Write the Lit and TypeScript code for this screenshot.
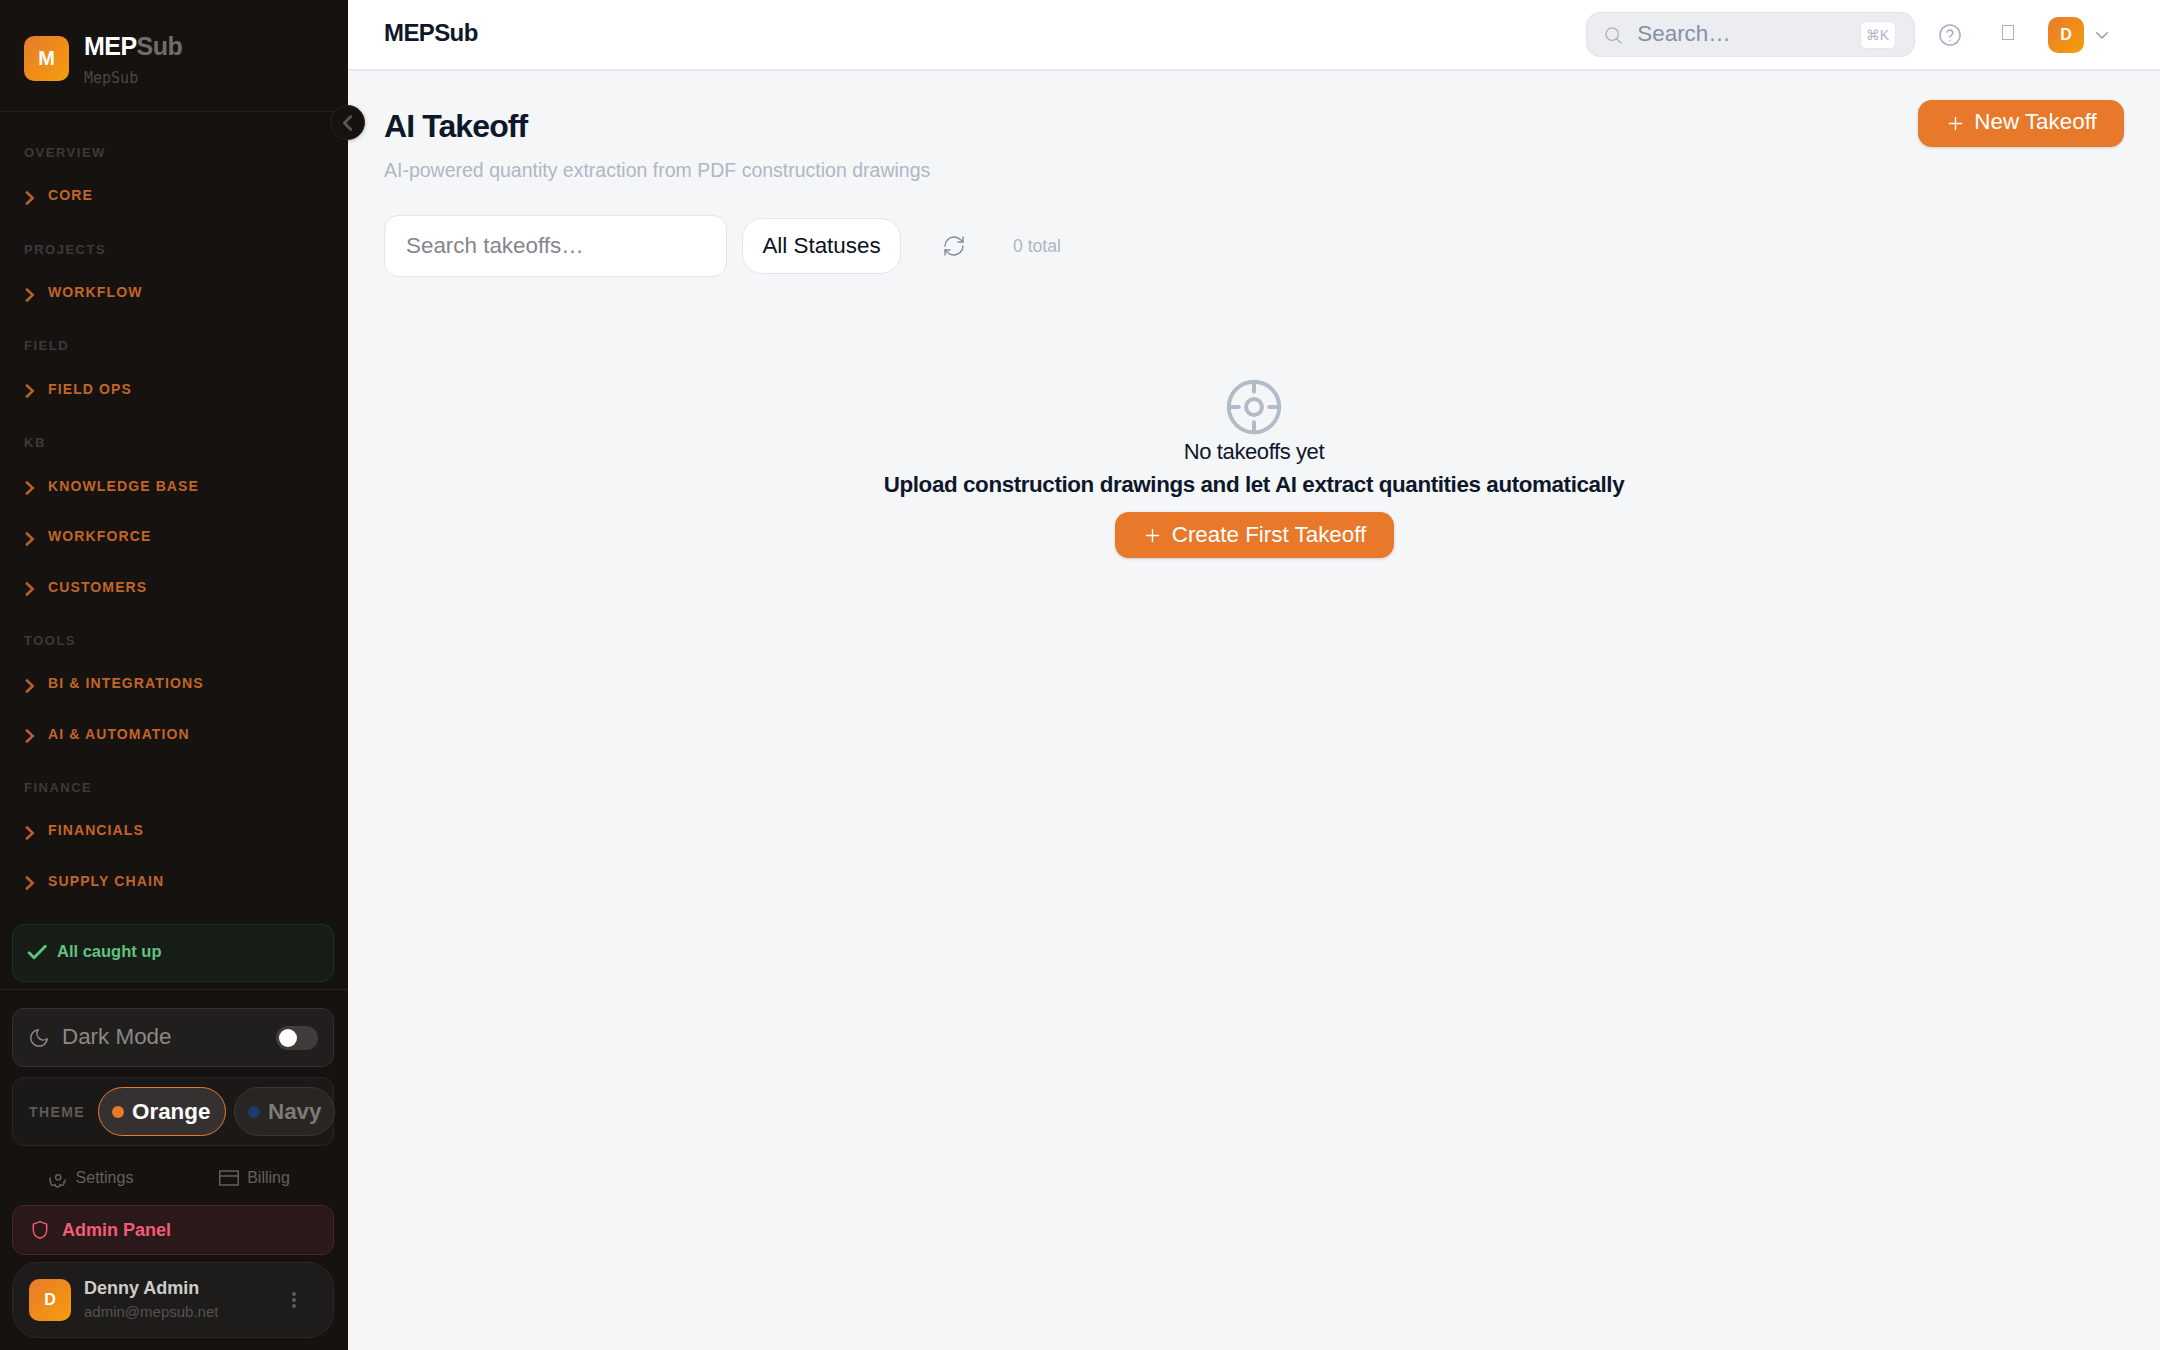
import { LitElement, html, css, svg } from 'lit';
import { customElement } from 'lit/decorators.js';

const chevron = html`<svg class="chev" viewBox="0 0 24 24"><path d="M2.500 4.500l8 7.500-8 7.500" /></svg>`;

const navGroups: { label: string; items: string[] }[] = [
  { label: 'OVERVIEW', items: ['CORE'] },
  { label: 'PROJECTS', items: ['WORKFLOW'] },
  { label: 'FIELD', items: ['FIELD OPS'] },
  { label: 'KB', items: ['KNOWLEDGE BASE', 'WORKFORCE', 'CUSTOMERS'] },
  { label: 'TOOLS', items: ['BI & INTEGRATIONS', 'AI & AUTOMATION'] },
  { label: 'FINANCE', items: ['FINANCIALS', 'SUPPLY CHAIN'] },
];

const plus = svg`<path d="M12 5v14M5 12h14" />`;

@customElement('app-root')
export class AppRoot extends LitElement {
  static styles = css`
    :host {
      display: flex;
      width: 2160px;
      height: 1350px;
      overflow: hidden;
      background: #f5f6f8;
      font-family: 'Liberation Sans', Arial, sans-serif;
      color: #0f172a;
    }
    svg {
      fill: none;
      stroke: currentColor;
      stroke-linecap: round;
      stroke-linejoin: round;
      flex: none;
    }

    /* sidebar */
    .sidebar {
      position: relative;
      width: 348px;
      flex: none;
      height: 1350px;
      box-sizing: border-box;
      background: #151210;
      display: flex;
      flex-direction: column;
    }
    .brand {
      height: 112px;
      flex: none;
      box-sizing: border-box;
      border-bottom: 1px solid #262321;
      display: flex;
      align-items: flex-start;
      gap: 15px;
      padding: 36px 24px 0;
    }
    .logo {
      width: 45px;
      height: 45px;
      border-radius: 10px;
      background: linear-gradient(135deg, #e87a2c, #f59e0b);
      color: #fff;
      font-weight: 700;
      font-size: 20px;
      display: flex;
      align-items: center;
      justify-content: center;
      flex: none;
    }
    .brand-name {
      font-size: 25px;
      font-weight: 700;
      letter-spacing: -0.55px;
      line-height: 30px;
      color: #fff;
      margin-top: -5px;
    }
    .brand-name span {
      color: #6f6d6b;
    }
    .brand-sub {
      font-family: 'DejaVu Sans Mono', monospace;
      font-size: 15px;
      line-height: 16px;
      color: #4a4846;
      margin-top: 9px;
    }
    .collapse {
      position: absolute;
      top: 105px;
      right: -17px;
      width: 35px;
      height: 35px;
      border-radius: 50%;
      background: #151210;
      border: 1px solid #262321;
      box-sizing: border-box;
      box-shadow: 0 1px 4px rgba(0, 0, 0, 0.25);
      color: #5a5755;
      display: flex;
      align-items: center;
      justify-content: center;
    }
    .collapse svg {
      width: 22px;
      height: 22px;
      stroke-width: 3;
    }
    .nav {
      padding: 32px 24px 0;
      height: 812px;
      flex: none;
      box-sizing: border-box;
    }
    .group-label {
      font-size: 13px;
      font-weight: 700;
      letter-spacing: 1.5px;
      line-height: 18px;
      color: #3c3a38;
    }
    .group {
      margin-bottom: 20px;
    }
    .nav-item {
      height: 50.5px;
      display: flex;
      align-items: center;
      gap: 4px;
      font-size: 14px;
      font-weight: 700;
      letter-spacing: 1.12px;
      color: #c2652a;
    }
    .group-label + .nav-item {
      margin-top: 8.2px;
    }
    .chev {
      width: 20px;
      height: 20px;
      stroke-width: 3;
      margin-top: 5px;
      stroke-linecap: butt;
      stroke-linejoin: miter;
      color: #b9602a;
    }
    .status {
      margin: 0 14px 0 12px;
      height: 58px;
      flex: none;
      box-sizing: border-box;
      border: 1px solid #18351f;
      border-radius: 12px;
      background: #161d17;
      color: #62c27f;
      display: flex;
      align-items: flex-start;
      gap: 10px;
      padding: 17px 14px 0;
      font-size: 16.5px;
      font-weight: 700;
    }
    .status svg {
      width: 20px;
      height: 20px;
      stroke-width: 3.4;
    }
    .foot {
      margin-top: 7px;
      border-top: 1px solid #262321;
      padding: 18px 14px 0 12px;
      display: flex;
      flex-direction: column;
    }
    .dark {
      height: 59px;
      box-sizing: border-box;
      border: 1px solid #33302e;
      border-radius: 12px;
      background: #211f1d;
      color: #8b8886;
      display: flex;
      align-items: center;
      padding: 0 15px;
      font-size: 22.4px;
      gap: 12px;
    }
    .dark span {
      margin-top: -1px;
    }
    .dark svg {
      width: 22px;
      height: 22px;
      stroke-width: 1.6;
    }
    .toggle {
      margin-left: auto;
      width: 42px;
      height: 24px;
      border-radius: 12px;
      background: #3f3c3a;
      display: flex;
      align-items: center;
      padding-left: 3px;
      box-sizing: border-box;
    }
    .toggle i {
      width: 18px;
      height: 18px;
      border-radius: 50%;
      background: #fff;
    }
    .theme {
      margin-top: 10px;
      height: 69px;
      box-sizing: border-box;
      border: 1px solid #292624;
      border-radius: 12px;
      background: #1b1917;
      display: flex;
      align-items: center;
      padding-left: 16px;
    }
    .theme-label {
      font-size: 14px;
      font-weight: 700;
      letter-spacing: 1.4px;
      color: #5e5b59;
      margin-right: 13px;
    }
    .pill {
      height: 49px;
      box-sizing: border-box;
      border-radius: 25px;
      display: flex;
      align-items: center;
      gap: 8px;
      font-size: 22.4px;
      font-weight: 700;
      flex: none;
    }
    .pill i {
      width: 12px;
      height: 12px;
      border-radius: 50%;
    }
    .pill.on {
      width: 128px;
      padding-left: 13px;
      border: 1.5px solid #e87a2c;
      background: #353130;
      color: #fff;
    }
    .pill.on i {
      background: #e87a2c;
    }
    .pill.off {
      width: 101px;
      margin-left: 8px;
      padding-left: 13px;
      border: 1.5px solid #3a3735;
      background: #282523;
      color: #7d7a78;
    }
    .pill.off i {
      background: #1e3a6e;
    }
    .links {
      height: 59px;
      box-sizing: border-box;
      padding-top: 5px;
      display: flex;
      align-items: center;
      color: #63605e;
      font-size: 16px;
    }
    .links div {
      display: flex;
      align-items: center;
      justify-content: center;
      gap: 8px;
    }
    .links .settings {
      flex: 0 0 157px;
    }
    .links .billing {
      flex: 1;
      padding-left: 6px;
    }
    .links svg {
      width: 20px;
      height: 20px;
      stroke-width: 1.5;
    }
    .admin {
      height: 50px;
      box-sizing: border-box;
      border: 1px solid #4d2329;
      border-radius: 12px;
      background: #2b181a;
      color: #f25c75;
      display: flex;
      align-items: center;
      gap: 12px;
      padding-left: 17px;
      font-size: 18px;
      font-weight: 700;
    }
    .admin svg {
      width: 20px;
      height: 22px;
      stroke-width: 1.8;
    }
    .user {
      margin-top: 7px;
      height: 76px;
      box-sizing: border-box;
      border: 1px solid #2b2826;
      border-radius: 26px;
      background: #1e1c1a;
      display: flex;
      align-items: center;
      padding: 0 16px;
      gap: 13px;
    }
    .user .avatar {
      width: 42px;
      height: 42px;
      border-radius: 10px;
      background: linear-gradient(135deg, #e87a2c, #f59e0b);
      color: #fff;
      font-weight: 700;
      font-size: 16px;
      display: flex;
      align-items: center;
      justify-content: center;
      flex: none;
    }
    .user-name {
      font-size: 18px;
      font-weight: 700;
      color: #cfcdcb;
      line-height: 22px;
    }
    .user-mail {
      font-size: 15px;
      color: #55524f;
      line-height: 22px;
      margin-top: 2px;
    }
    .dots {
      margin-left: auto;
      margin-right: 21px;
      display: flex;
      flex-direction: column;
      gap: 2px;
    }
    .dots i {
      width: 4px;
      height: 4px;
      border-radius: 50%;
      background: #5d5a58;
    }

    /* main */
    .main {
      flex: 1;
      min-width: 0;
      display: flex;
      flex-direction: column;
    }
    .topbar {
      height: 71px;
      box-sizing: border-box;
      background: #fff;
      border-bottom: 2px solid #e4e7ee;
      display: flex;
      align-items: center;
      padding: 0 49px 0 36px;
    }
    .topbar-title {
      font-size: 24px;
      font-weight: 700;
      letter-spacing: -0.6px;
      margin-top: -3px;
    }
    .top-search {
      margin-left: auto;
      width: 329px;
      height: 45px;
      box-sizing: border-box;
      border: 1.5px solid #e0e3ea;
      border-radius: 14px;
      background: #ebedf1;
      display: flex;
      align-items: center;
      padding: 0 18.5px 0 16.3px;
      gap: 14px;
      color: #8490a6;
      font-size: 22.4px;
    }
    .top-search span {
      margin-top: -1px;
    }
    .top-search svg {
      width: 20px;
      height: 20px;
      stroke-width: 1.6;
      color: #a9b2c0;
    }
    .top-search kbd {
      margin-left: auto;
      width: 36px;
      height: 28px;
      box-sizing: border-box;
      border: 1px solid #e4e7ee;
      border-radius: 6px;
      background: #fff;
      color: #aeb5c3;
      font-family: 'Liberation Sans', sans-serif;
      font-size: 14px;
      display: flex;
      align-items: center;
      justify-content: center;
    }
    .help {
      width: 24px;
      height: 24px;
      margin-left: 23px;
      color: #a9b2c4;
      stroke-width: 1.6;
    }
    .tofu {
      width: 12px;
      height: 15px;
      box-sizing: border-box;
      border: 1.5px solid #a9b2c4;
      margin-left: 39.5px;
      margin-top: -4px;
    }
    .top-avatar {
      width: 36px;
      height: 36px;
      border-radius: 10px;
      background: linear-gradient(135deg, #e87a2c, #f59e0b);
      color: #fff;
      font-size: 16px;
      font-weight: 700;
      display: flex;
      align-items: center;
      justify-content: center;
      margin-left: 34.5px;
    }
    .caret {
      width: 18px;
      height: 18px;
      margin-left: 9px;
      color: #8490a6;
      stroke-width: 1.6;
    }

    .content {
      padding: 0 36px;
    }
    .page-head {
      display: flex;
      align-items: flex-start;
      justify-content: space-between;
    }
    h1 {
      margin: 35px 0 0;
      font-size: 32px;
      line-height: 40px;
      letter-spacing: -0.9px;
      font-weight: 700;
    }
    .subtitle {
      font-size: 19.5px;
      line-height: 24px;
      color: #b0b7c4;
      margin-top: 12px;
    }
    .btn {
      display: inline-flex;
      align-items: center;
      justify-content: center;
      box-sizing: border-box;
      border-radius: 14px;
      background: #e8792b;
      color: #fff;
      font-size: 22.4px;
      box-shadow: 0 1px 3px rgba(15, 23, 42, 0.18);
      gap: 8px;
    }
    .btn svg {
      width: 21px;
      height: 21px;
      stroke-width: 1.6;
    }
    .new {
      margin-top: 29px;
      width: 206px;
      height: 47px;
    }
    .new span {
      margin-bottom: 3px;
    }
    .filters {
      display: flex;
      align-items: center;
      margin-top: 33px;
    }
    .search {
      width: 343px;
      height: 62px;
      box-sizing: border-box;
      border: 1.5px solid #e2e5ec;
      border-radius: 14px;
      background: #fff;
      color: #85858d;
      font-size: 22.4px;
      display: flex;
      align-items: center;
      padding-left: 21px;
    }
    .select {
      margin-left: 15px;
      width: 159px;
      height: 56px;
      box-sizing: border-box;
      border: 1.5px solid #e2e5ec;
      border-radius: 20px;
      background: #fff;
      font-size: 22.4px;
      color: #0b1220;
      display: flex;
      align-items: center;
      justify-content: center;
    }
    .refresh {
      width: 24px;
      height: 24px;
      margin-left: 41px;
      color: #7f8b9e;
      stroke-width: 1.4;
    }
    .count {
      margin-left: 47px;
      font-size: 17.6px;
      color: #aeb6c3;
    }
    .empty {
      display: flex;
      flex-direction: column;
      align-items: center;
      margin-top: 102px;
    }
    .target {
      width: 56px;
      height: 56px;
      color: #b3bbc8;
      stroke-width: 1.7;
    }
    .empty-title {
      font-size: 22px;
      line-height: 28px;
      letter-spacing: -0.4px;
      margin-top: 3px;
    }
    .empty-text {
      font-size: 22.4px;
      font-weight: 700;
      line-height: 28px;
      letter-spacing: -0.4px;
      margin-top: 5px;
    }
    .create {
      margin-top: 13px;
      width: 279px;
      height: 46px;
      gap: 9px;
    }
  `;

  render() {
    return html`
      <aside class="sidebar">
        <div class="brand">
          <div class="logo">M</div>
          <div>
            <div class="brand-name">MEP<span>Sub</span></div>
            <div class="brand-sub">MepSub</div>
          </div>
        </div>
        <div class="collapse">
          <svg viewBox="0 0 24 24"><path d="M15 5l-7 7 7 7" /></svg>
        </div>
        <nav class="nav">
          ${navGroups.map(
            (g) => html`
              <div class="group">
                <div class="group-label">${g.label}</div>
                ${g.items.map((i) => html`<div class="nav-item">${chevron}<span>${i}</span></div>`)}
              </div>
            `
          )}
        </nav>
        <div class="status">
          <svg viewBox="0 0 24 24"><path d="M2.500 13l6 6L22 5" /></svg>
          <span>All caught up</span>
        </div>
        <div class="foot">
          <div class="dark">
            <svg viewBox="0 0 24 24"><path d="M21 12.800A9 9 0 1 1 11.200 3a7 7 0 0 0 9.800 9.800z" /></svg>
            <span>Dark Mode</span>
            <div class="toggle"><i></i></div>
          </div>
          <div class="theme">
            <span class="theme-label">THEME</span>
            <div class="pill on"><i></i>Orange</div>
            <div class="pill off"><i></i>Navy</div>
          </div>
          <div class="links">
            <div class="settings">
              <svg viewBox="0 0 20 20">
                <circle cx="10.200" cy="9.300" r="2.600" />
                <path d="M2.500 10A2 2 0 0 0 3 13.500 2.300 2.300 0 0 0 7 16.300 2.200 2.200 0 0 0 12 16.500 2.300 2.300 0 0 0 15.800 14 2 2 0 0 0 17.300 12" />
              </svg>
              <span>Settings</span>
            </div>
            <div class="billing">
              <svg viewBox="0 0 20 20" stroke-linecap="butt" stroke-linejoin="miter"><path d="M.75 3h18.500v14H.75zM.75 8h18.500" /></svg>
              <span>Billing</span>
            </div>
          </div>
          <div class="admin">
            <svg viewBox="0 0 24 24"><path d="M12 2l8 3v7c0 5-3.500 8.500-8 10-4.500-1.500-8-5-8-10V5z" /></svg>
            <span>Admin Panel</span>
          </div>
          <div class="user">
            <div class="avatar">D</div>
            <div>
              <div class="user-name">Denny Admin</div>
              <div class="user-mail">admin@mepsub.net</div>
            </div>
            <div class="dots"><i></i><i></i><i></i></div>
          </div>
        </div>
      </aside>
      <main class="main">
        <header class="topbar">
          <div class="topbar-title">MEPSub</div>
          <div class="top-search">
            <svg viewBox="0 0 24 24"><circle cx="11" cy="11" r="7.500" /><path d="M16.500 16.500l5 5" /></svg>
            <span>Search…</span>
            <kbd>⌘K</kbd>
          </div>
          <svg class="help" viewBox="0 0 24 24">
            <circle cx="12" cy="12" r="10" />
            <path d="M9.100 9a3 3 0 0 1 5.800 1c0 2-3 2.500-3 4" />
            <path d="M12 17.500h.01" />
          </svg>
          <div class="tofu"></div>
          <div class="top-avatar">D</div>
          <svg class="caret" viewBox="0 0 24 24"><path d="M5 9l7 7 7-7" /></svg>
        </header>
        <div class="content">
          <div class="page-head">
            <div>
              <h1>AI Takeoff</h1>
              <div class="subtitle">AI-powered quantity extraction from PDF construction drawings</div>
            </div>
            <div class="btn new"><svg viewBox="0 0 24 24">${plus}</svg><span>New Takeoff</span></div>
          </div>
          <div class="filters">
            <div class="search">Search takeoffs…</div>
            <div class="select">All Statuses</div>
            <svg class="refresh" viewBox="0 0 24 24">
              <path d="M3 12a9 9 0 0 1 9-9 9.750 9.750 0 0 1 6.740 2.740L21 8" />
              <path d="M21 3v5h-5" />
              <path d="M21 12a9 9 0 0 1-9 9 9.750 9.750 0 0 1-6.740-2.740L3 16" />
              <path d="M8 16H3v5" />
            </svg>
            <div class="count">0 total</div>
          </div>
          <div class="empty">
            <svg class="target" viewBox="0 0 24 24">
              <circle cx="12" cy="12" r="10.800" />
              <circle cx="12" cy="12" r="3.400" />
              <path d="M12 1.200v4.300M12 18.500v4.300M1.200 12h4.300M18.500 12h4.300" />
            </svg>
            <div class="empty-title">No takeoffs yet</div>
            <div class="empty-text">Upload construction drawings and let AI extract quantities automatically</div>
            <div class="btn create"><svg viewBox="0 0 24 24">${plus}</svg>Create First Takeoff</div>
          </div>
        </div>
      </main>
    `;
  }
}
